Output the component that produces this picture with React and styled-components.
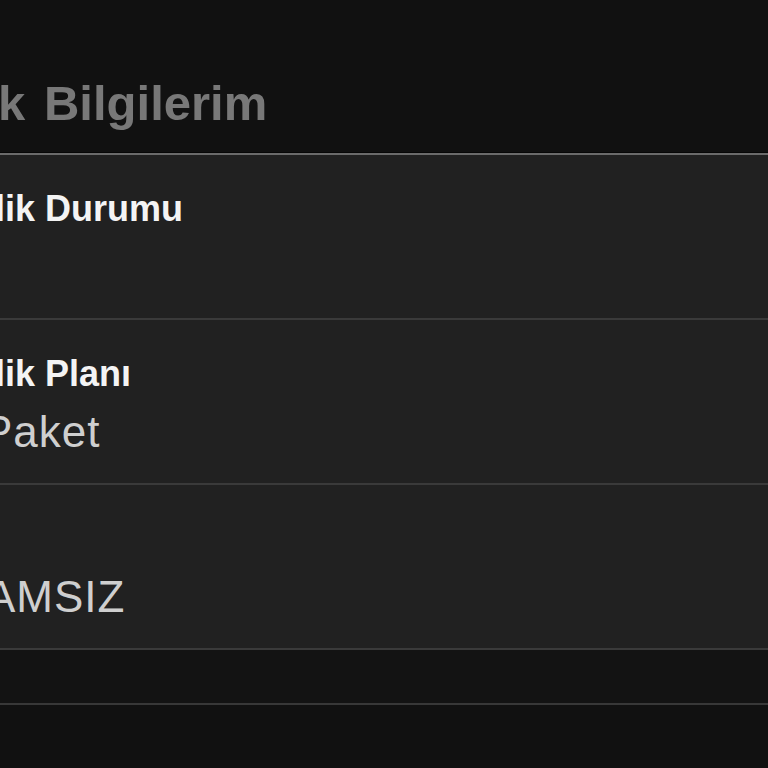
import React from 'react'
import styled, { createGlobalStyle } from 'styled-components'

const GlobalStyle = createGlobalStyle`
  html, body {
    margin: 0;
    background: #111111;
  }
  body {
    font-family: 'Liberation Sans', Arial, sans-serif;
    -webkit-font-smoothing: antialiased;
  }
`

const rows = [
  { label: 'Üyelik Durumu', value: '', inset: -17 },
  { label: 'Üyelik Planı', value: 'Paket', inset: -17 },
  { label: '', value: 'ZAMSIZ', inset: -42 },
]

export default function App() {
  return (
    <>
      <GlobalStyle />
      <Screen>
        <Header>
          <Title>Üyelik Bilgilerim</Title>
        </Header>
        <Group>
          {rows.map((row, i) => (
            <Row key={i}>
              <Label>{row.label}</Label>
              <Value $inset={row.inset}>{row.value}</Value>
            </Row>
          ))}
        </Group>
        <Footer />
      </Screen>
    </>
  )
}

const Screen = styled.div`
  width: 768px;
  height: 768px;
  overflow: hidden;
  background: #111111;
  display: flex;
  flex-direction: column;
`

const Header = styled.div`
  height: 153px;
  box-sizing: border-box;
  padding-top: 75px;
  border-bottom: 1px solid #070707;
  flex-shrink: 0;
`

const Title = styled.h1`
  margin: 0 0 0 -119px;
  font-size: 49px;
  line-height: 56px;
  font-weight: bold;
  word-spacing: 5px;
  color: #787878;
  white-space: nowrap;
`

const Group = styled.div`
  border-top: 2px solid #6b6b6b;
  background: #212121;
  flex-shrink: 0;
`

const Row = styled.div`
  height: 165px;
  box-sizing: border-box;
  padding-top: 34px;
  border-bottom: 2px solid #3a3a3a;
  display: flex;
  flex-direction: column;
  gap: 13px;
`

const Label = styled.div`
  margin-left: -71px;
  min-height: 40px;
  font-size: 36px;
  line-height: 40px;
  font-weight: bold;
  color: #f4f4f4;
  white-space: nowrap;
`

const Value = styled.div`
  margin-left: ${p => p.$inset}px;
  min-height: 50px;
  font-size: 44px;
  line-height: 50px;
  letter-spacing: 1px;
  color: #cfcfcf;
  white-space: nowrap;
`

const Footer = styled.div`
  height: 53px;
  background: #131313;
  border-bottom: 2px solid #383838;
  flex-shrink: 0;
`
